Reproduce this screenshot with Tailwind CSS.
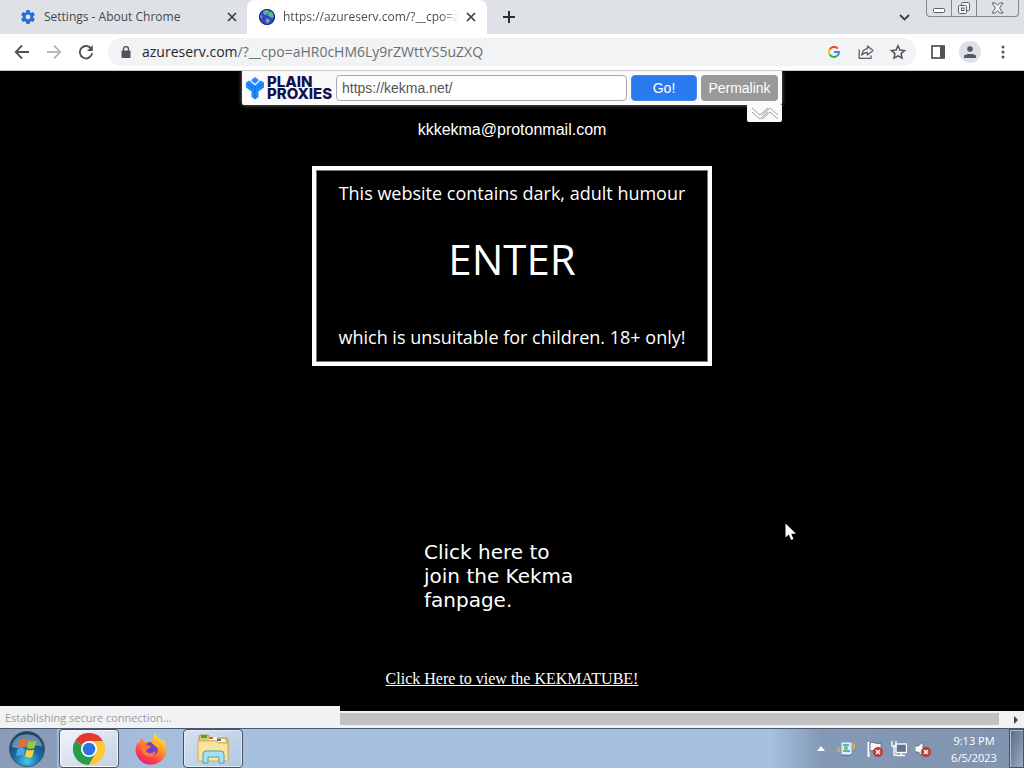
<!DOCTYPE html>
<html lang="en">
<head>
<meta charset="utf-8">
<title>Kekma</title>
<script src="https://cdn.jsdelivr.net/npm/@tailwindcss/browser@4"></script>
</head>
<body class="flex h-screen flex-col overflow-hidden bg-black font-['Open_Sans','Noto_Sans',sans-serif]">

<!-- Tab strip -->
<header class="relative flex h-[34px] shrink-0 items-stretch bg-[#dee1e6] text-xs text-[#45494d]">
  <div class="flex w-[247px] items-center pr-[7px] pl-5">
    <svg class="size-4 shrink-0" viewBox="0 0 16 16"><g fill="#2b6bd8"><circle cx="8" cy="8" r="5.3"/><rect x="6.1" y="1" width="3.8" height="14" rx="1"/><rect x="6.1" y="1" width="3.8" height="14" rx="1" transform="rotate(60 8 8)"/><rect x="6.1" y="1" width="3.8" height="14" rx="1" transform="rotate(120 8 8)"/></g><circle cx="8" cy="8" r="2.4" fill="#dee1e6"/></svg>
    <span class="ml-2 flex-1 whitespace-nowrap">Settings - About Chrome</span>
    <button class="flex size-4 items-center justify-center" aria-label="Close tab"><svg class="size-[10px]" viewBox="0 0 10 10"><path d="M1 1l8 8M9 1l-8 8" stroke="#3c4043" stroke-width="1.7"/></svg></button>
  </div>
  <div class="flex w-[240px] items-center rounded-t-lg bg-white pr-2 pl-3">
    <svg class="size-4 shrink-0" viewBox="0 0 16 16"><circle cx="8" cy="8" r="8" fill="#3d3fd0"/><path d="M6 .8L9 1l1 2-2 1.500L7.500 6 5 5.500 4 3z" fill="#4fbf86"/><path d="M10.500 2.500l2.500.5 2 3-1 3-2.500-.5L10 7l-1.500-.5L9 4.500z" fill="#4fbf86"/><path d="M7 9.500l3 .5 1 2-2.500 2.800L6.500 12z" fill="#4fbf86"/><path d="M1 6l2 .5.500 2L2 10z" fill="#4fbf86"/><circle cx="8" cy="8" r="7.5" fill="none" stroke="#28276f"/></svg>
    <span class="ml-2 w-[176px] overflow-hidden bg-linear-to-r from-[#45494d] from-90% to-transparent bg-clip-text whitespace-nowrap text-transparent">https://azureserv.com/?__cpo=aH</span>
    <button class="ml-auto flex size-4 items-center justify-center" aria-label="Close tab"><svg class="size-[10px]" viewBox="0 0 10 10"><path d="M1 1l8 8M9 1l-8 8" stroke="#3c4043" stroke-width="1.7"/></svg></button>
  </div>
  <button class="ml-[14px] flex w-4 items-center justify-center" aria-label="New tab"><svg class="size-3" viewBox="0 0 12 12"><path d="M6 0v12M0 6h12" stroke="#2d3033" stroke-width="2"/></svg></button>
  <button class="ml-auto flex w-4 items-center justify-center" aria-label="Search tabs"><svg class="h-[7px] w-[11px]" viewBox="0 0 11 7"><path d="M1 1l4.500 4.500L10 1" fill="none" stroke="#3c4043" stroke-width="1.8"/></svg></button>
  <div class="mr-[5px] ml-[14px] flex h-[17px] overflow-hidden rounded-b border border-t-0 border-[#85898f]">
    <button class="flex w-[25px] items-center justify-center border-r border-[#85898f]" aria-label="Minimize"><svg class="h-[16px] w-[14px]" viewBox="0 0 14 16"><rect x="1.500" y="8.500" width="11" height="4" rx="1" fill="#fff" stroke="#5c6066"/></svg></button>
    <button class="flex w-[25px] items-center justify-center border-r border-[#85898f]" aria-label="Restore"><svg class="size-[14px]" viewBox="0 0 14 14"><g fill="#f2f3f5" stroke="#5c6066"><rect x="4.500" y="1.500" width="8" height="8" rx="1"/><rect x="1.500" y="4.500" width="8" height="8" rx="1"/><rect x="4.500" y="7" width="2.500" height="2.500"/></g></svg></button>
    <button class="flex w-[41px] items-center justify-center" aria-label="Close"><svg class="h-[12px] w-[13px]" viewBox="0 0 13 12"><path d="M1 1h3.500L6.500 3.300 8.500 1H12L8.500 6 12 11H8.500L6.500 8.700 4.500 11H1L4.500 6z" fill="#f5f6f8" stroke="#5c6066"/></svg></button>
  </div>
</header>

<!-- Toolbar -->
<nav class="flex h-[37px] shrink-0 items-center border-b border-[#c9c9c9] bg-white pr-[14px] pl-[14px]">
  <button class="size-4" aria-label="Back"><svg viewBox="0 0 16 16"><path d="M15 8H2M8 1.500L1.700 8 8 14.500" fill="none" stroke="#505357" stroke-width="1.800"/></svg></button>
  <button class="ml-4 size-4" aria-label="Forward"><svg viewBox="0 0 16 16"><path d="M1 8h13M8 1.500L14.300 8 8 14.500" fill="none" stroke="#b6b8bb" stroke-width="1.800"/></svg></button>
  <button class="ml-4 size-4" aria-label="Reload"><svg viewBox="0 0 16 16"><path d="M13.400 5A6.200 6.200 0 1 0 14.200 9.200" fill="none" stroke="#505357" stroke-width="1.900"/><path d="M14.800 1v6H9z" fill="#505357"/></svg></button>
  <div class="ml-[14px] flex h-7 flex-1 items-center rounded-full bg-[#f1f3f4] pr-[10px] pl-[13px]">
    <svg class="h-3 w-[10px] shrink-0" viewBox="0 0 10 12"><rect x=".5" y="4.500" width="9" height="7.500" rx="1" fill="#505357"/><path d="M2.500 5V3a2.500 2.500 0 0 1 5 0v2" fill="none" stroke="#505357" stroke-width="1.400"/></svg>
    <a href="#" class="ml-[11px] text-sm text-[#6b6f73]"><span class="text-[#26282b]">azureserv.com</span>/?__cpo=aHR0cHM6Ly9rZWttYS5uZXQ</a>
    <button class="ml-auto size-3" aria-label="Google"><svg viewBox="0 0 12 12" fill="none" stroke-width="2"><path d="M9.800 2.600A5 5 0 0 0 1.700 3.500" stroke="#ea4335"/><path d="M1.700 3.500a5 5 0 0 0 0 5" stroke="#fbbc05"/><path d="M1.700 8.500a5 5 0 0 0 7.500 1.300" stroke="#34a853"/><path d="M9.200 9.800A4.800 4.800 0 0 0 11 6H6" stroke="#4285f4"/></svg></button>
    <button class="ml-[18px] size-4" aria-label="Share"><svg viewBox="0 0 16 16" fill="none" stroke="#5b5f63" stroke-width="1.300" stroke-linejoin="round"><path d="M1.200 5.500V14.300H13V11.500"/><path d="M9.500 2L15 6.500 9.500 11V8.500C6.500 8.500 5 9.500 3.700 11.200 4.200 7.500 6 5 9.500 4.600z"/></svg></button>
    <button class="ml-4 size-4" aria-label="Bookmark"><svg viewBox="0 0 16 16"><path d="M8 1.800l1.900 4.200 4.600.5-3.400 3.100.9 4.500-4-2.300-4 2.300.9-4.500L1.500 6.500 6.100 6z" fill="none" stroke="#505357" stroke-width="1.500"/></svg></button>
  </div>
  <button class="ml-[15px] size-[14px]" aria-label="Side panel"><svg viewBox="0 0 14 14"><rect x="1" y="1" width="12" height="12" fill="#fff" stroke="#505357" stroke-width="1.700"/><rect x="9" y="1" width="5" height="12" fill="#505357"/></svg></button>
  <button class="ml-[14px] flex size-[22px] items-center justify-center rounded-full bg-[#dde1e7]" aria-label="Profile"><svg class="size-3" viewBox="0 0 12 12" fill="#4f5b68"><circle cx="6" cy="3" r="2.800"/><path d="M0 12V9.800C1 7.500 11 7.500 12 9.800V12z"/></svg></button>
  <button class="ml-[15px] h-4 w-[14px]" aria-label="Menu"><svg viewBox="0 0 14 16" fill="#505357"><circle cx="7" cy="3" r="1.500"/><circle cx="7" cy="8" r="1.500"/><circle cx="7" cy="13" r="1.500"/></svg></button>
</nav>

<!-- Page -->
<main class="relative flex min-h-0 flex-1 flex-col items-center overflow-hidden bg-black text-white">
  <form class="relative flex h-[34px] w-[540px] shrink-0 items-center gap-1 rounded-b-xs bg-[#fafafa] px-1 font-['Liberation_Sans',Arial,sans-serif] shadow-[0_0_4px_#777]">
    <a href="#" class="flex w-[86px] shrink-0 items-center gap-[3px]" aria-label="Plain Proxies">
      <svg class="h-[24px] w-[18px] shrink-0" viewBox="0 0 18 24"><path d="M9 1l4 3.300-4 3.400-4-3.400zM0 6.500l3.500-2L9 9.500l5.500-5 3.500 2v5l-5.500 4V21L9 23.500 5.500 21v-5.500L0 11.500z" fill="#218bfb"/><path d="M9 10v12M2 8l5 4.500M16 8l-5 4.500" stroke="#0b60d8" stroke-width=".8"/></svg>
      <span class="font-['Inter',sans-serif] text-[15px] leading-[12px] font-extrabold text-[#11114e]">PLAIN<br>PROXIES</span>
    </a>
    <input type="text" aria-label="Address" value="https://kekma.net/" class="h-[26px] min-w-0 flex-1 rounded-sm border border-[#aaa] bg-white px-[5px] text-[14px] text-[#555]">
    <button type="button" class="h-[26px] w-[66px] rounded-sm border border-[#4b89e8] bg-[#2a7af0] text-[14px] text-white">Go!</button>
    <button type="button" class="h-[26px] w-[77px] rounded-sm bg-[#999] text-[14px] text-white">Permalink</button>
    <button type="button" aria-label="Collapse" class="absolute top-[34px] right-0 flex h-[17px] w-[35px] items-center justify-center rounded-b-xs bg-[#fafafa]"><svg class="h-[13px] w-[26px]" viewBox="0 0 26 13" fill="none" stroke="#a0a0a0"><path d="M0 1l8 7 8-7M0 5l8 7 8-7"/><path d="M10 8l8-7 8 7M10 12l8-7 8 7"/></svg></button>
  </form>

  <p class="mt-[15px] font-['Liberation_Sans',Arial,sans-serif] text-base leading-5">kkkekma@protonmail.com</p>

  <a href="#" class="mt-[26px] block h-[200px] w-[400px] shrink-0 border-4 border-white">
    <span class="flex h-full flex-col items-center border border-[#777] pt-[10px] text-[18px] leading-6">
      <span class="whitespace-nowrap">This website contains dark, adult humour</span>
      <span class="mt-[30px] text-[42px] leading-[48px]">ENTER</span>
      <span class="mt-[42px] whitespace-nowrap">which is unsuitable for children. 18+ only!</span>
    </span>
  </a>

  <a href="#" class="mt-[174px] block w-[176px] font-['DejaVu_Sans',sans-serif] text-[20px] leading-6">Click here to<br>join the Kekma<br>fanpage.</a>

  <a href="#" class="mt-[57px] font-['Liberation_Serif',serif] text-base leading-5 underline">Click Here to view the KEKMATUBE!</a>

  <svg class="absolute top-[452px] left-[785px] h-[18px] w-[12px]" viewBox="0 0 12 18"><path d="M.5.500v14l3.300-3L6.200 17l2.300-1-2.300-5.200H11z" fill="#fff"/></svg>

  <div class="absolute bottom-0 left-0 h-[5px] w-[340px] bg-[#f1f2f3]"></div>
</main>

<!-- Status text and scroll bar -->
<div class="flex h-[17px] shrink-0 bg-[#f1f1f1]">
  <div class="w-[340px] bg-[#f1f2f3] pl-[5px] text-[11px] leading-[14px] text-[#9a9c9f]">Establishing secure connection...</div>
  <div class="mt-[2px] mb-[3px] flex-1 bg-[#c1c1c1]"></div>
  <button class="flex w-[25px] items-center justify-end pr-[6px]" aria-label="Scroll right"><svg class="h-2 w-1" viewBox="0 0 4 8"><path d="M0 0l4 4-4 4z" fill="#404040"/></svg></button>
</div>

<!-- Taskbar -->
<footer class="flex h-[40px] shrink-0 items-stretch border-t border-[#4c5773] bg-linear-to-r from-[#9fb4cf] from-0% via-[#a6c0de] via-20% to-[#a6c0de] to-75% text-[11px]">
  <button class="flex w-[57px] items-center justify-center bg-[#8a9cb7] pr-[3px]" aria-label="Start">
    <svg class="size-[36px]" viewBox="0 0 36 36"><defs><radialGradient id="orb" cx=".5" cy=".85" r=".85"><stop offset="0" stop-color="#42c8e8"/><stop offset=".45" stop-color="#1a689f"/><stop offset="1" stop-color="#173d63"/></radialGradient></defs><circle cx="18" cy="18" r="17.500" fill="url(#orb)" stroke="#3c5672"/><path d="M3 16C4-1 32-1 33 16 24 11 12 20 3 16z" fill="#fff" opacity=".35"/><path d="M11 9c3-2 5-1 7 0l-1.500 7.500c-3-1.400-5-1-7.500 0z" fill="#ed6b2d"/><path d="M19.500 9.500c3 1.500 5 1 8 0l-2 7.500c-3 1.300-5 1-7.500 0z" fill="#9bc73c"/><path d="M8.500 18c3-1.500 5-1 7.500 0l-1.500 7c-3-1.500-5-1-7.500 0z" fill="#49a8e6"/><path d="M17.500 18.500c3 1.300 5 1 7.700 0l-2 7.500c-3 1-5 .8-7.200-.5z" fill="#fcd13e"/></svg>
  </button>
  <button class="ml-[2px] flex w-[60px] items-center justify-center rounded-sm border border-[#425068] bg-linear-to-br from-[#f2f5f9] to-[#c3d0e2] shadow-[inset_0_0_0_1px_#f5f8fc]" aria-label="Google Chrome">
    <svg class="size-8" viewBox="0 0 32 32"><path d="M16 16L2.100 8A16 16 0 0 1 29.900 8z" fill="#e23b2e"/><path d="M2.100 8A16 16 0 0 0 16 32l7-12-7-4z" fill="#2a9b4b"/><path d="M29.900 8H16l7 12-7 12A16 16 0 0 0 29.900 8z" fill="#fcc934"/><circle cx="16" cy="16" r="8" fill="#fff"/><circle cx="16" cy="16" r="6.300" fill="#2c72e6"/></svg>
  </button>
  <button class="ml-[2px] flex w-[60px] items-center justify-center" aria-label="Firefox">
    <svg class="size-8" viewBox="0 0 32 32"><defs><linearGradient id="fox" x1=".85" y1="0" x2=".25" y2="1"><stop offset="0" stop-color="#fff34a"/><stop offset=".4" stop-color="#ff9a28"/><stop offset=".75" stop-color="#fb404d"/><stop offset="1" stop-color="#e51a78"/></linearGradient></defs><path d="M20 0c1 4 5 5 7 8l1-2c5 8 4 16 0 20-6 7-17 8-23 1C-.5 22-.5 14 3 9l1 2 2-6 4 4c3-1 5-1 6 0z" fill="url(#fox)"/><circle cx="16" cy="16" r="7" fill="#7340c8"/><path d="M7 12c3-2 5 1 9 1-1 3-4 2-5 5 2 3 6 3 9 0 1 4-4 7-8 5-4-1-7-6-5-11z" fill="#ff7b2c"/><path d="M16 9c4-1 8 3 8 7l-4-3z" fill="#ffb52d"/></svg>
  </button>
  <button class="ml-[2px] flex w-[60px] items-center justify-center rounded-sm border border-[#425068] bg-linear-to-br from-[#d7e2f0] to-[#b1c6df] shadow-[inset_0_0_0_1px_#e1ebf6]" aria-label="Windows Explorer">
    <svg class="h-[30px] w-[34px]" viewBox="0 0 34 30"><path d="M3 3q0-2 2-2h7l2 3h16q2 0 2 2v20H3z" fill="#e8c769" stroke="#b99742"/><path d="M5 1h6v3H5z" fill="#45a843"/><path d="M13 3h8v3h-8z" fill="#f5f5ef"/><path d="M13 3h4v2h-4z" fill="#d4622c"/><path d="M21 5h8v3h-8z" fill="#f5f5ef"/><path d="M21 5h4v2h-4z" fill="#3c79bc"/><path d="M2 7h18l2 2h10v18H2z" fill="#f8e49c" stroke="#d1b057"/><path d="M7 29V20q0-3 3-3h15q3 0 3 3v9h-5v-6H12v6z" fill="#a6dff2" stroke="#4b9dbd"/></svg>
  </button>
  <div class="ml-auto flex w-[253px] items-center bg-linear-to-r from-transparent via-[#8399b5] via-20% to-[#8194ae] pl-[46px]">
    <button aria-label="Show hidden icons"><svg class="h-[5px] w-2" viewBox="0 0 8 5"><path d="M4 0l4 5H0z" fill="#fff"/></svg></button>
    <svg class="ml-3 size-[18px]" viewBox="0 0 18 18"><rect x="4" y="2" width="11" height="13" rx="1" fill="#d9eefa" stroke="#65a9d2"/><path d="M6 5h6M6 11h7" stroke="#4791c5" stroke-width="1.500"/><path d="M2 12q-2-3 1-4M15 4l3 1-2 4" fill="none" stroke="#e8ac36" stroke-width="2"/><circle cx="9" cy="8" r="2" fill="#86b837"/><path d="M4 15l8 1 3-2" stroke="#3a7db5" fill="none"/></svg>
    <svg class="ml-3 size-4" viewBox="0 0 16 16"><path d="M1.500 1v15" stroke="#fff" stroke-width="2"/><path d="M3 2c4-2 6 2 11 0v8c-5 2-7-2-11 0z" fill="#f7f9fb" stroke="#455268" stroke-width=".7"/><circle cx="11" cy="11" r="4.700" fill="#d23431" stroke="#8f2b2c" stroke-width=".5"/><path d="M9 9l4 4M13 9l-4 4" stroke="#fff" stroke-width="1.500"/></svg>
    <svg class="ml-2 size-4" viewBox="0 0 16 16"><rect x="5" y="3" width="10.500" height="8.500" fill="#60758f" stroke="#fff" stroke-width="1.300"/><path d="M6 14.500h8M10 12v2" stroke="#fff" stroke-width="1.500"/><path d="M1 0v5h4V0M3 5v9h3" fill="none" stroke="#fff" stroke-width="1.300"/></svg>
    <svg class="ml-2 size-4" viewBox="0 0 16 16"><path d="M0 5h3l5-4v14l-5-4H0z" fill="#f7f9fb" stroke="#48566c" stroke-width=".7"/><circle cx="11" cy="11" r="4.700" fill="#d23431" stroke="#8f2b2c" stroke-width=".5"/><path d="M9 9l4 4M13 9l-4 4" stroke="#fff" stroke-width="1.500"/></svg>
    <div class="flex-1 pl-2 text-center leading-[17px] whitespace-nowrap text-white"><time>9:13 PM<br>6/5/2023</time></div>
    <button class="h-full w-[15px] border border-[#465469] bg-linear-to-br from-[#596a83] to-[#9aabc2] shadow-[inset_1px_1px_0_#b0bdd0]" aria-label="Show desktop"></button>
  </div>
</footer>
</body>
</html>
